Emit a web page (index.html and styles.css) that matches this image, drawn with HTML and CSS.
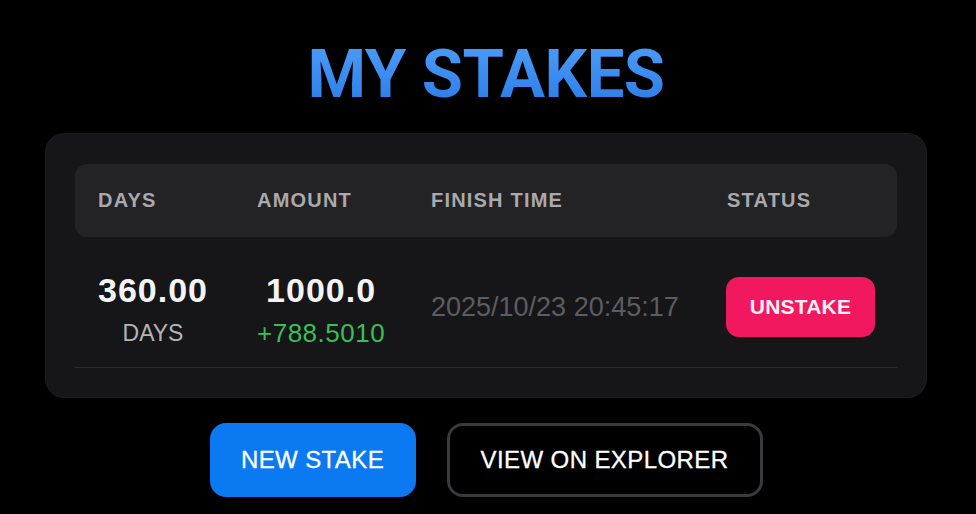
FILE: index.html
```html
<!DOCTYPE html>
<html lang="en">
<head>
<meta charset="utf-8">
<title>My Stakes</title>
<link rel="stylesheet" href="styles.css">
</head>
<body>
<main class="page">
  <h1 class="title">MY STAKES</h1>

  <section class="card">
    <div class="table-head">
      <span>DAYS</span>
      <span>AMOUNT</span>
      <span>FINISH TIME</span>
      <span>STATUS</span>
    </div>

    <div class="table-row">
      <div class="stack">
        <span class="stack-main">360.00</span>
        <span class="stack-sub">DAYS</span>
      </div>
      <div class="stack">
        <span class="stack-main">1000.0</span>
        <span class="stack-sub reward">+788.5010</span>
      </div>
      <div class="finish">2025/10/23 20:45:17</div>
      <div class="status">
        <button class="btn-unstake" type="button">UNSTAKE</button>
      </div>
    </div>
  </section>

  <div class="actions">
    <button class="btn btn-primary" type="button">NEW STAKE</button>
    <button class="btn btn-outline" type="button">VIEW ON EXPLORER</button>
  </div>
</main>
</body>
</html>
```

FILE: styles.css
```css
* {
  box-sizing: border-box;
}

html,
body {
  margin: 0;
  background: #000;
}

body {
  font-family: "Liberation Sans", Arial, sans-serif;
  color: #f2f2f4;
}

.page {
  display: flex;
  flex-direction: column;
  align-items: center;
  padding: 41px 4px 0 0;
}

.title {
  margin: 0;
  font-family: Roboto, "Liberation Sans", sans-serif;
  font-weight: 700;
  font-size: 67px;
  line-height: 67px;
  letter-spacing: -0.5px;
  background: linear-gradient(180deg, #4c9df8 0%, #3a8bf0 55%, #2a7ae4 100%);
  -webkit-background-clip: text;
  background-clip: text;
  color: transparent;
}

.card {
  width: 882px;
  margin-top: 25px;
  padding: 31px 30px 30px;
  background: #161618;
  border-radius: 20px;
  box-shadow: inset 0 0 0 1px #1d1d20;
}

.table-head,
.table-row {
  display: grid;
  grid-template-columns: 159px 174px 296px 1fr;
  align-items: center;
  padding-left: 23px;
}

.table-head {
  height: 73px;
  background: #232325;
  border-radius: 12px;
  font-size: 20px;
  font-weight: 700;
  letter-spacing: 1.2px;
  color: #a9a9ae;
}

.table-row {
  height: 131px;
  padding-top: 10px;
  border-bottom: 1px solid #2a2a2d;
}

.stack {
  display: inline-flex;
  flex-direction: column;
  align-items: center;
  justify-self: start;
}

.stack-main {
  font-size: 34px;
  line-height: 44px;
  font-weight: 700;
  letter-spacing: 1px;
  color: #f4f4f6;
}

.stack-sub {
  margin-top: 7px;
  font-size: 23px;
  line-height: 28px;
  color: #b4b4b8;
}

.stack-sub.reward {
  font-size: 26px;
  letter-spacing: 0.5px;
  color: #38bf55;
}

.finish {
  font-size: 27px;
  color: #5c5c61;
}

.status {
  justify-self: start;
  margin-left: -1px;
}

.btn-unstake {
  width: 149px;
  height: 60px;
  border: 0;
  border-radius: 13px;
  background: #f2185f;
  color: #fff2f7;
  font-family: inherit;
  font-size: 21px;
  font-weight: 700;
  letter-spacing: 0.2px;
}

.actions {
  display: flex;
  gap: 31px;
  margin-top: 25px;
}

.btn {
  height: 74px;
  padding: 0 30px;
  border-radius: 16px;
  font-family: inherit;
  font-size: 24px;
  letter-spacing: 0.4px;
  color: #fff;
  -webkit-text-stroke: 0.3px currentColor;
}

.btn-primary {
  width: 206px;
  border: 0;
  background: #0a79f2;
}

.btn-outline {
  width: 316px;
  background: #000;
  border: 3px solid #3a3a3e;
}
```
